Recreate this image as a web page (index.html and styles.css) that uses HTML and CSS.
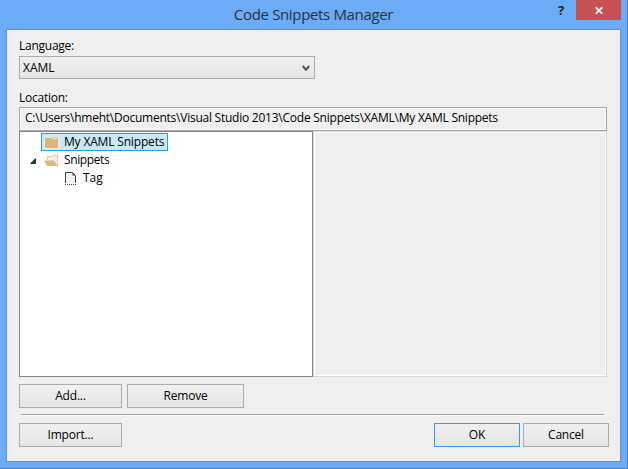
FILE: index.html
```
<!DOCTYPE html>
<html lang="en">
<head>
    <meta charset="UTF-8">
    <title>Code Snippets Manager</title>
    <link rel="stylesheet" href="styles.css">
</head>
<body>
    <div class="window">
        <div class="titlebar">
            <h1>Code Snippets Manager</h1>
            <div class="window-buttons">
                <span class="help">?</span>
                <button class="close" aria-label="Close">
                    <svg width="8" height="7" viewBox="0 0 8 7"><path d="M0.8 0.3L7.2 6.7M7.2 0.3L0.8 6.7" stroke="#fff" stroke-width="1.7"/></svg>
                </button>
            </div>
        </div>

        <div class="client">
            <label class="language-label">Language:</label>
            <div class="dropdown">
                <span>XAML</span>
                <svg width="8" height="7" viewBox="0 0 8 7"><path d="M0.7 1L4 4.6L7.3 1" fill="none" stroke="#555" stroke-width="2.1"/></svg>
            </div>
            <label class="location-label">Location:</label>
            <div class="location">C:\Users\hmeht\Documents\Visual Studio 2013\Code Snippets\XAML\My XAML Snippets</div>

            <div class="panes">
                <div class="tree">
                    <div class="row">
                        <div class="item selected">
                            <svg width="15" height="13" viewBox="0 0 15 13"><path d="M0 1.5H7L8.5 0H15V13H0Z" fill="#f0eadf"/><path d="M1 2H8L9 1H14V12H1Z" fill="#dcb67a"/><path d="M9 2.5H13" stroke="#f3eadc"/></svg>
                            <span>My XAML Snippets</span>
                        </div>
                    </div>
                    <div class="row">
                        <svg class="arrow" width="6" height="6" viewBox="0 0 6 6"><path d="M5.5 0.7V5.5H0.7Z" fill="#404040" stroke="#262626"/></svg>
                        <div class="item open">
                            <svg width="15" height="13" viewBox="0 0 15 13"><path d="M3.5 6V2.5H8L9.5 1H13.5V12" fill="#f0eff1" stroke="#e3c79c"/><path d="M0 6.5H10L13.5 12H3Z" fill="#dcb67a"/></svg>
                            <span>Snippets</span>
                        </div>
                    </div>
                    <div class="row">
                        <div class="item child">
                            <svg width="11" height="13" viewBox="0 0 11 13"><path d="M0.5 11V0.5H7.5L10.5 3.5V11" fill="#f0eff1" stroke="#424242"/><path d="M7.5 0.5V3.5H10.5Z" fill="#424242"/><path d="M0 12.5H11" stroke="#424242" stroke-dasharray="1 1"/></svg>
                            <span>Tag</span>
                        </div>
                    </div>
                </div>
                <div class="details"></div>
            </div>

            <div class="buttons">
                <button class="btn add">Add...</button>
                <button class="btn remove">Remove</button>
            </div>
            <div class="separator"></div>
            <div class="buttons footer">
                <button class="btn add">Import...</button>
                <button class="btn ok">OK</button>
                <button class="btn">Cancel</button>
            </div>
        </div>
    </div>
</body>
</html>
```
FILE: styles.css
```
* {
    box-sizing: border-box;
}
body {
    margin: 0;
    font-family: "Open Sans", "Noto Sans", sans-serif;
    font-size: 12px;
    line-height: 16px;
    color: #000;
}
svg {
    display: block;
    flex: none;
}
span {
    white-space: nowrap;
}
.window {
    width: 628px;
    height: 469px;
    padding: 0 6px 6px;
    background: #6cabf5;
    border-right: 1px solid #4a80bf;
    border-bottom: 1px solid #4a80bf;
}
.titlebar {
    display: grid;
    grid-template-columns: 1fr auto;
    height: 29px;
}
h1 {
    grid-area: 1 / 1 / 2 / 3;
    margin: 0;
    padding-top: 4px;
    text-align: center;
    font-size: 15px;
    line-height: 20px;
    font-weight: normal;
    letter-spacing: -0.34px;
    color: #26323f;
}
.window-buttons {
    grid-area: 1 / 2;
    display: flex;
}
.help {
    width: 18px;
    font-size: 13px;
    line-height: 20px;
    font-weight: bold;
    color: #222;
}
.close {
    display: flex;
    align-items: center;
    justify-content: center;
    width: 45px;
    height: 20px;
    padding: 1px 0 0 1px;
    border: 0;
    background: #c75050;
}
.client {
    height: 433px;
    padding: 8px 11px 0 12px;
    border: 1px solid #5791d3;
    background: #efefef;
}
.language-label,
.location-label {
    display: block;
    height: 16px;
    letter-spacing: -0.25px;
}
.dropdown {
    display: flex;
    align-items: center;
    justify-content: space-between;
    width: 296px;
    height: 23px;
    margin-top: 2px;
    padding: 1px 4px 0 3px;
    border: 1px solid #acacac;
    background: linear-gradient(#f0f0f0, #e5e5e5);
}
.location-label {
    margin-top: 11px;
}
.location {
    width: 588px;
    height: 24px;
    margin-top: 1px;
    padding: 2px 0 0 5px;
    border: 1px solid #a5a7ad;
    box-shadow: inset 0 0 0 1px #fafafa;
    letter-spacing: -0.24px;
    white-space: nowrap;
}
.panes {
    display: flex;
    width: 588px;
    height: 246px;
}
.tree {
    width: 294px;
    padding-top: 1px;
    border: 1px solid #828790;
    background: #fff;
}
.row {
    display: flex;
    align-items: center;
    height: 18px;
    padding-left: 21px;
}
.item {
    display: flex;
    align-items: center;
    gap: 5px;
    height: 18px;
    padding: 0 3px 0 2px;
    border: 1px solid transparent;
    letter-spacing: -0.17px;
}
.selected {
    width: 127px;
    border-color: #26a0da;
    background: #cbe8f6;
}
.open {
    letter-spacing: -0.38px;
}
.child {
    margin-left: 21px;
    gap: 7px;
    letter-spacing: 0;
}
.arrow {
    margin: 2px 5px 0 -11px;
}
.details {
    width: 294px;
    border: 1px solid #dadada;
    box-shadow: inset 0 0 0 1px #fff;
}
.buttons {
    display: flex;
    gap: 5px;
    margin-top: 7px;
}
.btn {
    width: 86px;
    height: 24px;
    padding: 0 0 1px;
    border: 1px solid #acacac;
    background: linear-gradient(#f0f0f0, #e5e5e5);
    font: inherit;
    letter-spacing: -0.2px;
}
.add {
    width: 103px;
}
.remove {
    width: 117px;
}
.separator {
    width: 583px;
    height: 2px;
    margin: 6px 0 0 2px;
    border-top: 1px solid #a0a0a0;
    border-bottom: 1px solid #fff;
}
.footer {
    gap: 3px;
    width: 590px;
}
.ok {
    margin-left: auto;
    border-color: #3399ff;
}
```
